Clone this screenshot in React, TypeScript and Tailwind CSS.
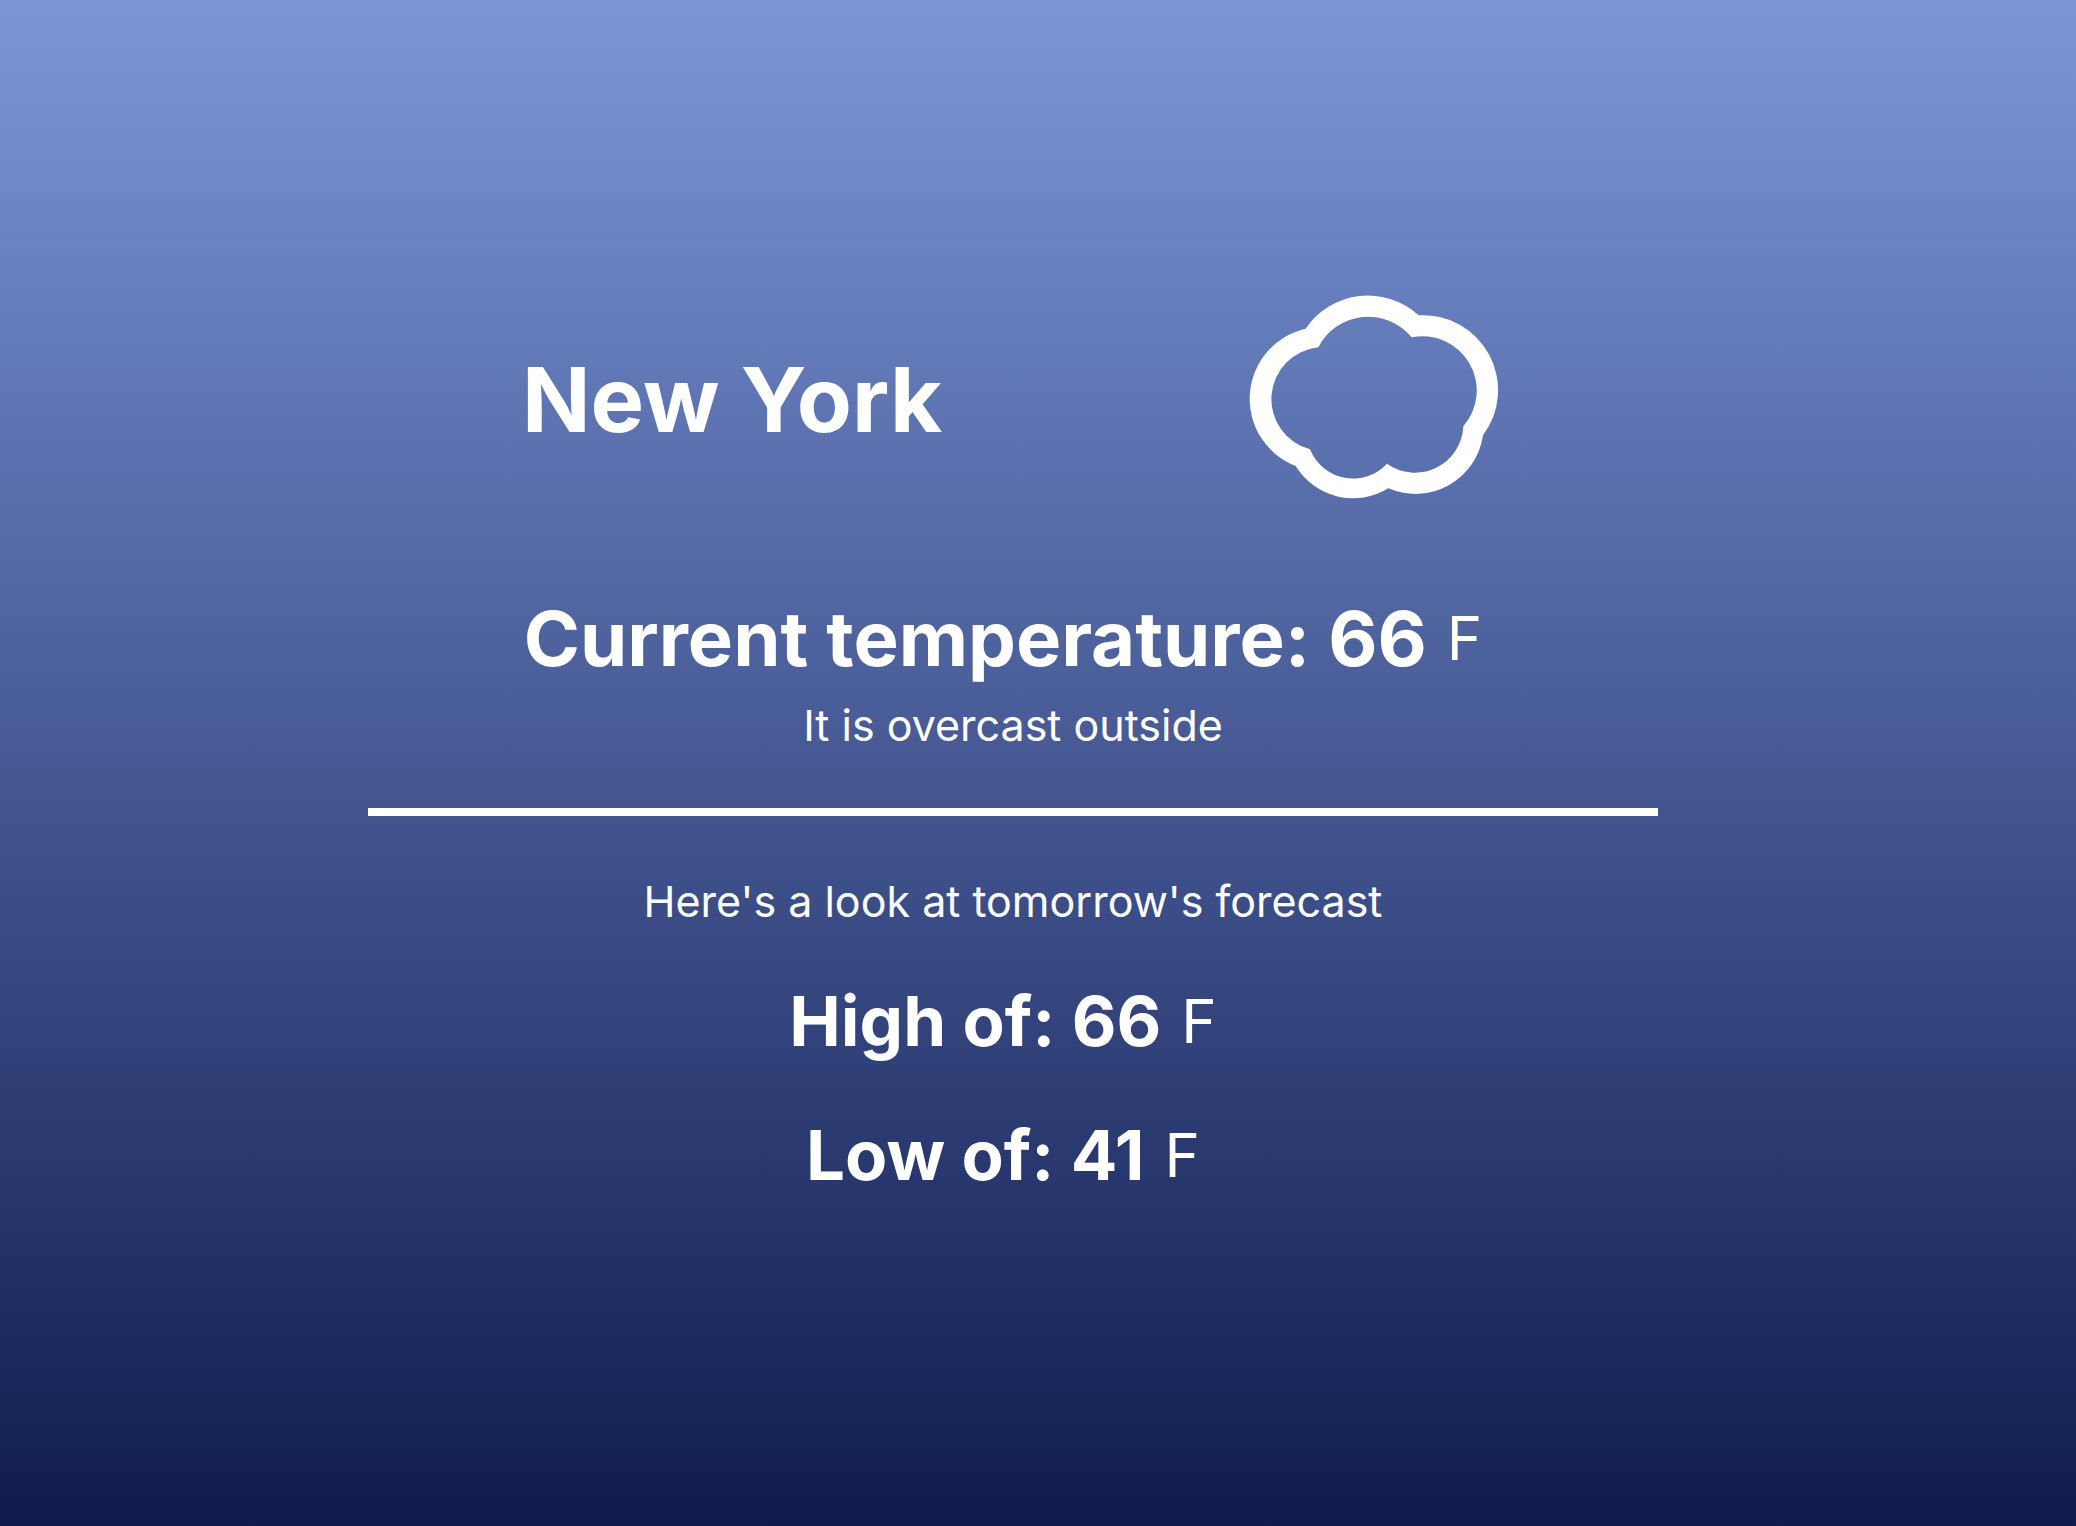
import React from "react";

function CloudIcon() {
  return (
    <svg
      role="img"
      aria-label="Overcast"
      viewBox="85 73 765 612"
      className="h-[204px] w-[255px] shrink-0 fill-white"
    >
      <path
        fillRule="evenodd"
        d="M255 174A225 225 0 0 1 594 134A225 225 0 0 1 787 494A205 205 0 0 1 503 653A202 202 0 0 1 225 586A216 216 0 0 1 255 174Z
           M293 230A168 168 0 0 1 573 200A163 163 0 0 1 728 467A145 145 0 0 1 499 579A139 139 0 0 1 268 536A156 156 0 0 1 293 230Z"
      />
    </svg>
  );
}

function Unit() {
  return <span className="mx-5 text-[60px] leading-none">F</span>;
}

type ReadingProps = { label: string; value: number };

function ForecastReading({ label, value }: ReadingProps) {
  return (
    <div className="flex items-center">
      <h3 className="text-[69px] leading-[96px] font-bold">
        {label}: {value}
      </h3>
      <Unit />
    </div>
  );
}

export default function App() {
  return (
    <main className="flex min-h-screen flex-col items-center bg-[linear-gradient(#7c96d8,#0f1b4e)] pt-[295px] pr-[50px] font-['Inter',sans-serif] text-white">
      <header className="flex w-full max-w-[982px] items-center justify-between">
        <h1 className="pt-1.5 text-[90px] leading-[112px] font-bold">New York</h1>
        <CloudIcon />
      </header>
      <section className="mt-[91px] flex w-full flex-col items-center">
        <div className="flex items-center">
          <h2 className="text-[76px] leading-[96px] font-bold">Current temperature: {66}</h2>
          <Unit />
        </div>
        <p className="mt-[9px] text-[43px] leading-[60px]">It is overcast outside</p>
      </section>
      <hr className="mt-[53px] h-2 w-full max-w-[1290px] border-0 bg-white" />
      <section className="mt-[55px] flex flex-col items-center">
        <p className="text-[43px] leading-[60px]">Here's a look at tomorrow's forecast</p>
        <div className="mt-[42px] flex flex-col items-center gap-[38px]">
          <ForecastReading label="High of" value={66} />
          <ForecastReading label="Low of" value={41} />
        </div>
      </section>
    </main>
  );
}
